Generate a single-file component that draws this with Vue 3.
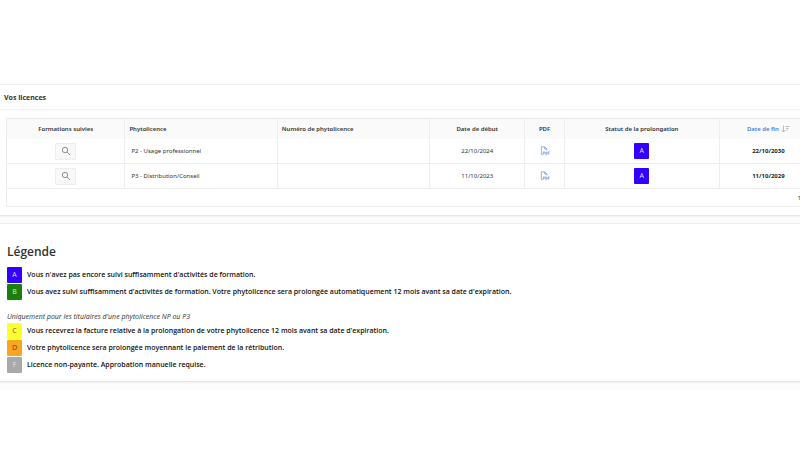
<script setup>
const licences = [
  { name: 'P2 - Usage professionnel', number: '', start: '22/10/2024', status: 'A', end: '22/10/2030' },
  { name: 'P3 - Distribution/Conseil', number: '', start: '11/10/2023', status: 'A', end: '11/10/2029' },
]

const generalLegend = [
  { code: 'A', text: "Vous n'avez pas encore suivi suffisamment d'activités de formation." },
  { code: 'B', text: "Vous avez suivi suffisamment d'activités de formation. Votre phytolicence sera prolongée automatiquement 12 mois avant sa date d'expiration." },
]

const paidLegend = [
  { code: 'C', text: "Vous recevrez la facture relative à la prolongation de votre phytolicence 12 mois avant sa date d'expiration." },
  { code: 'D', text: 'Votre phytolicence sera prolongée moyennant le paiement de la rétribution.' },
  { code: 'F', text: 'Licence non-payante. Approbation manuelle requise.' },
]
</script>

<template>
  <main class="page">
    <section class="panel">
      <h2 class="panel-title">Vos licences</h2>
      <div class="panel-body">
        <table class="report">
          <colgroup>
            <col class="w-formations" />
            <col class="w-text" />
            <col class="w-text" />
            <col class="w-date" />
            <col class="w-pdf" />
            <col class="w-status" />
            <col class="w-end" />
          </colgroup>
          <thead>
            <tr>
              <th scope="col">Formations suivies</th>
              <th scope="col" class="left">Phytolicence</th>
              <th scope="col" class="left">Numéro de phytolicence</th>
              <th scope="col">Date de début</th>
              <th scope="col">PDF</th>
              <th scope="col">Statut de la prolongation</th>
              <th scope="col" aria-sort="descending">
                <a href="#" class="sort">
                  Date de fin
                  <svg class="sort-icon" viewBox="0 0 9 8" aria-hidden="true">
                    <path d="M2.5 0.5V7M0.5 5L2.5 7L4.5 5M4.5 1.5H8.5M5 3.5H7.5M5.5 5.5H6.5" />
                  </svg>
                </a>
              </th>
            </tr>
          </thead>
          <tbody>
            <tr v-for="licence in licences" :key="licence.name">
              <td>
                <button type="button" class="search" aria-label="Formations suivies">
                  <svg viewBox="0 0 10 10" aria-hidden="true">
                    <circle cx="4" cy="4" r="2.7" />
                    <path d="M6 6L9 9" />
                  </svg>
                </button>
              </td>
              <td class="left name">{{ licence.name }}</td>
              <td class="left">{{ licence.number }}</td>
              <td>{{ licence.start }}</td>
              <td>
                <a href="#" class="pdf" aria-label="PDF">
                  <svg viewBox="0 0 18 18" aria-hidden="true">
                    <path d="M5 15.5H2.5V1.5H8.5L12.5 5.5V8M8.5 1.5V5.5H12.5" />
                    <path d="M6 15.5V10.5H7.5Q9 10.5 9 12Q9 13.2 7.5 13.2H6M10.5 10.5V15.5Q13 15.5 13 13Q13 10.5 10.5 10.5M14.8 15.5V10.5H17.3M14.8 13H17" />
                  </svg>
                </a>
              </td>
              <td><span class="badge" :class="`badge-${licence.status}`">{{ licence.status }}</span></td>
              <td class="end">{{ licence.end }}</td>
            </tr>
          </tbody>
          <tfoot>
            <tr>
              <td colspan="7" class="pagination">1</td>
            </tr>
          </tfoot>
        </table>
      </div>
    </section>

    <section class="panel legend">
      <h2 class="legend-title">Légende</h2>
      <ul class="legend-list">
        <li v-for="item in generalLegend" :key="item.code">
          <span class="badge" :class="`badge-${item.code}`">{{ item.code }}</span>
          <strong>{{ item.text }}</strong>
        </li>
      </ul>
      <p class="note">Uniquement pour les titulaires d'une phytolicence NP ou P3</p>
      <ul class="legend-list">
        <li v-for="item in paidLegend" :key="item.code">
          <span class="badge" :class="`badge-${item.code}`">{{ item.code }}</span>
          <strong>{{ item.text }}</strong>
        </li>
      </ul>
    </section>
  </main>
</template>

<style>
body {
  background: #fff;
}
</style>

<style scoped>
.page {
  display: flex;
  flex-direction: column;
  gap: 7px;
  margin: 84px 0 0;
  padding-bottom: 8px;
  overflow: hidden;
  background: #fcfcfc;
  color: #333;
  font-family: "Open Sans", "Noto Sans", sans-serif;
  font-size: 6px;
  line-height: 8px;
}
.panel {
  border-top: 1px solid #eee;
  border-bottom: 1px solid #e8e8e8;
  background: #fff;
  box-shadow: 0 1px 1px #f3f3f3;
}
.panel-title {
  margin: 0;
  padding: 6px 4px 4px;
  border-bottom: 1px solid #f3f3f3;
  font-size: 7px;
  line-height: 14px;
  font-weight: 700;
}
.panel-body {
  padding: 8px 0 8px 6px;
}
.report {
  width: calc(100% + 18px);
  border: 1px solid #eaeaea;
  border-collapse: collapse;
  table-layout: fixed;
  font-family: "Noto Sans", "Open Sans", sans-serif;
}
.w-formations { width: 14.6%; }
.w-text { width: 18.8%; }
.w-date { width: 11.7%; }
.w-pdf { width: 4.9%; }
.w-status { width: 19.1%; }
.w-end { width: 12.1%; }
th,
td {
  padding: 0 4px;
  border-right: 1px solid #eee;
  text-align: center;
  white-space: nowrap;
}
th {
  height: 20px;
  background: #fafafa;
  font-weight: 600;
}
td {
  height: 24px;
  border-bottom: 1px solid #eee;
  color: #333;
}
.left {
  text-align: left;
}
.name {
  padding-left: 6px;
}
.end {
  color: #222;
  font-weight: 700;
}
.report .pagination {
  height: 17px;
  padding-right: 16px;
  text-align: right;
}
.sort {
  display: inline-flex;
  align-items: center;
  gap: 2px;
  color: #4a7bd4;
  text-decoration: none;
}
.sort-icon {
  width: 9px;
  height: 8px;
  fill: none;
  stroke: #aaa;
  stroke-width: 0.8;
}
.search {
  display: flex;
  align-items: center;
  justify-content: center;
  width: 21px;
  height: 17px;
  margin: 0 auto;
  padding: 0;
  border: 1px solid #eee;
  border-radius: 1px;
  background: #f8f8f8;
}
.search svg {
  width: 10px;
  height: 10px;
  fill: none;
  stroke: #777;
  stroke-width: 0.8;
}
.pdf {
  display: flex;
  justify-content: center;
}
.pdf svg {
  width: 10px;
  height: 10px;
  fill: none;
  stroke: #6f93d8;
  stroke-width: 1.3;
}
.badge {
  display: inline-flex;
  flex: none;
  align-items: center;
  justify-content: center;
  width: 15px;
  height: 16px;
  border-radius: 1px;
  font-size: 7px;
  vertical-align: middle;
}
.badge-A { background: #30f; color: #ddf; }
.badge-B { background: #1b800b; color: #cec; }
.badge-C { background: #ffff2b; color: #555; }
.badge-D { background: #f9a520; color: #543; }
.badge-F { background: #a9a9a9; color: #e4e4e4; }
.legend {
  padding: 19px 7px 8px;
}
.legend-title {
  margin: 0 0 7px;
  font-size: 12px;
  line-height: 17px;
  font-weight: 600;
}
.legend-list {
  display: flex;
  flex-direction: column;
  gap: 1px;
  margin: 0;
  padding: 0;
  list-style: none;
}
.legend-list li {
  display: flex;
  align-items: center;
  gap: 5px;
}
.legend-list strong {
  color: #111;
  font-size: 7px;
  font-weight: 600;
}
.note {
  margin: 13px 0 2px;
  font-size: 7px;
  font-style: italic;
}
</style>
